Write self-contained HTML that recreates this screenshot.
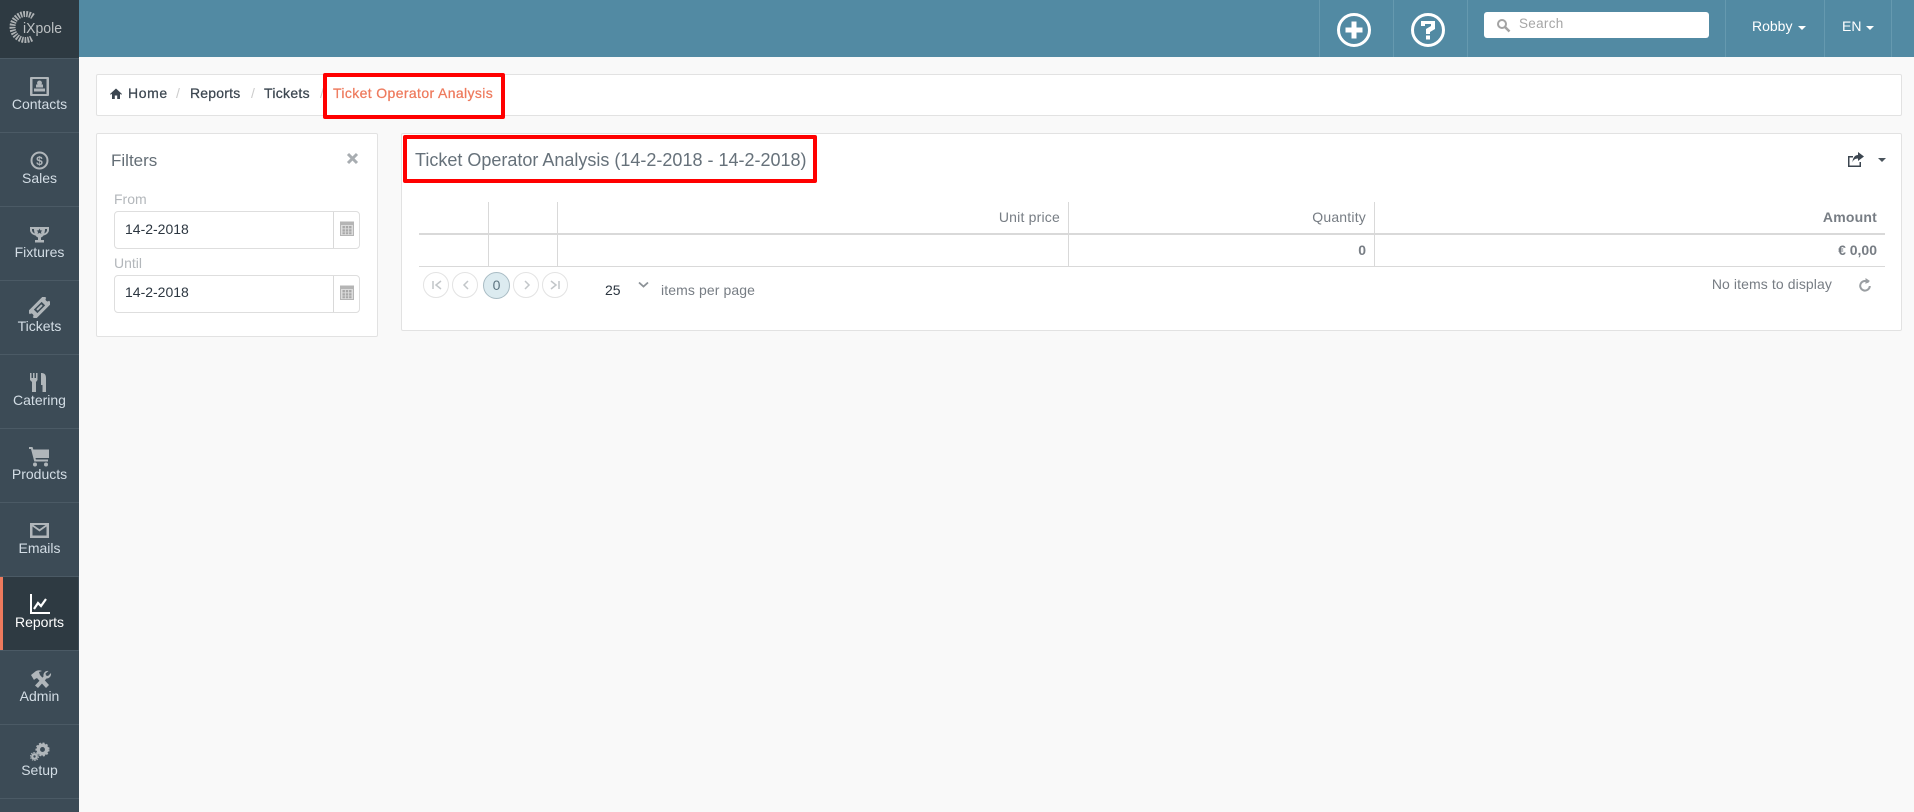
<!DOCTYPE html>
<html><head><meta charset="utf-8"><style>
html,body{margin:0;padding:0;width:1914px;height:812px;overflow:hidden;background:#f9f9f9;font-family:"Liberation Sans",sans-serif}
div,span,svg{position:absolute;white-space:nowrap}
.nl{left:0;width:79px;text-align:center;font-size:14px;line-height:20px;color:#d3dde5}
.nd{left:0;width:79px;height:1px;background:#4b5a65}
.ic{left:29px;width:21px;height:21px;fill:#b0b6ba}
.sep{top:0;width:1px;height:57px;background:#6599af}
.box{background:#fff;border:1px solid #e2e2e2;border-radius:2px;box-sizing:border-box}
.t{font-size:14px;line-height:18px;color:#3c4650}
.bc{-webkit-text-stroke:.25px currentColor}
.g{color:#777d84}
.vl{width:1px;background:#d9d9d9}
.pg{width:26px;height:26px;border:1px solid #e3e3e3;border-radius:50%;box-sizing:border-box;background:#fff;top:272px}
.red{border:4px solid #f00;box-sizing:border-box;border-radius:2px}
</style></head><body>

<div style="left:0;top:0;width:79px;height:812px;background:#3c4b56"></div>
<div style="left:0;top:0;width:79px;height:58px;background:#2e3a42"></div>
<svg style="left:0;top:0" width="79" height="58" viewBox="0 0 79 58">
<path d="M33 16.400A13 13 0 1 0 32 38.300" fill="none" stroke="#aeb2b4" stroke-width="6" stroke-dasharray="1.700 1.100"/>
<text x="23" y="33" font-family="Liberation Sans" font-size="15" fill="#bcc0c2" textLength="39" lengthAdjust="spacingAndGlyphs">iXpole</text>
</svg>

<div class="nd" style="top:58px"></div><div class="nd" style="top:132px"></div><div class="nd" style="top:206px"></div><div class="nd" style="top:280px"></div><div class="nd" style="top:354px"></div><div class="nd" style="top:428px"></div><div class="nd" style="top:502px"></div><div class="nd" style="top:576px"></div><div class="nd" style="top:650px"></div><div class="nd" style="top:724px"></div><div class="nd" style="top:798px"></div>

<div style="left:0;top:577px;width:78px;height:73px;background:#2e3a42"></div>
<div style="left:0;top:577px;width:3px;height:73px;background:#ee7a5d"></div>

<svg class="ic" style="top:76px" viewBox="0 0 21 21"><path fill-rule="evenodd" d="M2 1h17a1 1 0 0 1 1 1v17a1 1 0 0 1-1 1H2a1 1 0 0 1-1-1V2a1 1 0 0 1 1-1zm1.500 2v15h14V3zM10.500 4.500a2.500 2.500 0 0 1 2 4H14v3H7v-3h1.500a2.500 2.500 0 0 1 2-4zM5 12.500h11v3H5z"/></svg>
<div class="nl" style="top:94px">Contacts</div>

<svg class="ic" style="top:150px" viewBox="0 0 21 21"><path fill-rule="evenodd" d="M10.500 1.500a9 9 0 1 1 0 18 9 9 0 0 1 0-18zm0 2a7 7 0 1 0 0 14 7 7 0 0 0 0-14z"/><text x="10.500" y="15" text-anchor="middle" font-family="Liberation Sans" font-weight="bold" font-size="12">$</text></svg>
<div class="nl" style="top:168px">Sales</div>

<svg class="ic" style="top:224px" viewBox="0 0 21 21"><path fill-rule="evenodd" d="M1 3h19v3c0 3-3 5-5.500 5.500-.7 1-1.500 1.500-2.500 2V16h3v2.500H6V16h3v-2.500c-1-.5-1.800-1-2.500-2C4 11 1 9 1 6zm2 2v1c0 1.500 1.300 3 2.700 3.400-.4-1.300-.7-2.800-.7-4.400zm15 0h-2c0 1.600-.3 3.100-.7 4.400C16.700 9 18 7.500 18 6z"/><path d="M10.500 4.500l.9 1.900 2 .2-1.500 1.300.5 2-1.900-1-1.900 1 .5-2L7.600 6.600l2-.2z" fill="#3c4b56"/></svg>
<div class="nl" style="top:242px">Fixtures</div>

<svg class="ic" style="top:297px" viewBox="0 0 21 21"><g transform="rotate(-45 10.500 10.500)"><path fill-rule="evenodd" d="M-1 5h23v3.500a2 2 0 0 0 0 4V16H-1v-3.500a2 2 0 0 0 0-4zM5 8v5h11V8z"/><path d="M7 9.500h7v2H7z"/></g></svg>
<div class="nl" style="top:316px">Tickets</div>

<svg class="ic" style="top:372px" viewBox="0 0 21 21"><path d="M1 1h1.500v5H4V1h1.500v5H7V1h1.500v7l-1.500 2v10H3V10L1 8zM12 1c3 0 5 1 5 5v14h-3.500v-7H12z"/></svg>
<div class="nl" style="top:390px">Catering</div>

<svg class="ic" style="top:446px" viewBox="0 0 21 21"><path d="M0 1h3.500l.8 2.500H20v8.500H6.500l.4 1.500H19V15.500H5.300L2 3H0zM6 16.500a2 2 0 1 1 0 4 2 2 0 0 1 0-4zm11 0a2 2 0 1 1 0 4 2 2 0 0 1 0-4z"/></svg>
<div class="nl" style="top:464px">Products</div>

<svg class="ic" style="top:520px" viewBox="0 0 21 21"><path fill-rule="evenodd" d="M1 3h19v15H1zm2.500 3.500v9h14v-9l-7 5zM4.500 5l6 4.300L16.500 5z"/></svg>
<div class="nl" style="top:538px">Emails</div>

<svg class="ic" style="top:594px;fill:#fff" viewBox="0 0 21 21"><path d="M1 0h2v18h18v2H1z"/><path d="M5 15l4-6 3 3 5-7" fill="none" stroke="#fff" stroke-width="2.200"/></svg>
<div class="nl" style="top:612px;color:#fff">Reports</div>

<svg class="ic" style="top:669px;left:28px;width:24px;height:21px" viewBox="0 0 24 21"><path d="M3 6l5-4c2-1 4-1 6 0l-3 1 1 3 9 10-3 3-9-10-2 1-1 1z"/><path d="M23 4c.5 3-1.500 5.500-4.500 5.500L10 19l-3-2.500 8.500-9C15 4 17.500 1.500 20.500 2l-3 2.500 .5 2 2 .5z"/></svg>
<div class="nl" style="top:686px">Admin</div>

<svg class="ic" style="top:742px;left:29px;width:21px;height:21px" viewBox="0 0 21 21"><circle cx="13.500" cy="7.500" r="4.200" fill="none" stroke="#b0b6ba" stroke-width="3.500"/><circle cx="13.500" cy="7.500" r="6.300" fill="none" stroke="#b0b6ba" stroke-width="1.500" stroke-dasharray="2 1.700"/><circle cx="5.500" cy="14.500" r="2.300" fill="none" stroke="#b0b6ba" stroke-width="2.200"/><circle cx="5.500" cy="14.500" r="4" fill="none" stroke="#b0b6ba" stroke-width="1" stroke-dasharray="1.500 1"/></svg>
<div class="nl" style="top:760px">Setup</div>

<div style="left:79px;top:0;width:1835px;height:57px;background:#528aa3"></div>
<div class="sep" style="left:1319px"></div><div class="sep" style="left:1393px"></div><div class="sep" style="left:1467px"></div><div class="sep" style="left:1725px"></div><div class="sep" style="left:1824px"></div><div class="sep" style="left:1891px"></div>

<svg style="left:1336px;top:12px" width="36" height="36" viewBox="0 0 36 36"><circle cx="18" cy="18" r="15.500" fill="none" stroke="#fff" stroke-width="3"/><path d="M15.500 9.500h5v6h6v5h-6v6h-5v-6h-6v-5h6z" fill="#fff"/></svg>
<svg style="left:1410px;top:12px" width="36" height="36" viewBox="0 0 36 36"><circle cx="18" cy="18" r="15.500" fill="none" stroke="#fff" stroke-width="3"/><path d="M11 9h14v8l-5 3v2h-4v-5l5-3v-2h-6v2h-4zM16 23.500h4v4h-4z" fill="#fff"/></svg>

<div style="left:1484px;top:12px;width:225px;height:26px;background:#fff;border-radius:3px"></div>
<svg style="left:1496px;top:18px" width="15" height="15" viewBox="0 0 15 15"><circle cx="6" cy="6" r="4" fill="none" stroke="#a3a3a3" stroke-width="2"/><path d="M9 9l4.500 4.500" stroke="#a3a3a3" stroke-width="2.500"/></svg>
<div style="left:1519px;top:15px;font-size:13.500px;line-height:18px;color:#a6a6a6;letter-spacing:.3px">Search</div>
<div style="left:1752px;top:17px;font-size:14px;line-height:18px;color:#fff">Robby</div>
<div style="left:1798px;top:26px;width:0;height:0;border:4px solid transparent;border-top-color:#fff;border-bottom:0"></div>
<div style="left:1842px;top:17px;font-size:14px;line-height:18px;color:#fff">EN</div>
<div style="left:1866px;top:26px;width:0;height:0;border:4px solid transparent;border-top-color:#fff;border-bottom:0"></div>

<div class="box" style="left:96px;top:74px;width:1806px;height:42px"></div>
<svg style="left:110px;top:88px" width="12" height="11" viewBox="0 0 12 11"><path d="M6 .5L12 6l-.8.8L10 5.800V11H7.200V7.500H4.800V11H2V5.800L.8 6.800 0 6z" fill="#3c4650"/></svg>
<div class="t bc" style="left:128px;top:84px;letter-spacing:.6px">Home</div>
<div class="t" style="left:176px;top:84px;color:#ccc">/</div>
<div class="t bc" style="left:190px;top:84px;letter-spacing:.2px">Reports</div>
<div class="t" style="left:251px;top:84px;color:#ccc">/</div>
<div class="t bc" style="left:264px;top:84px;letter-spacing:.3px">Tickets</div>
<div class="t" style="left:320px;top:84px;color:#ccc">/</div>
<div class="t bc" style="left:333px;top:84px;color:#ee7a5d;letter-spacing:.37px">Ticket Operator Analysis</div>
<div class="red" style="left:323px;top:73px;width:182px;height:46px"></div>

<div class="box" style="left:96px;top:133px;width:282px;height:204px"></div>
<div style="left:111px;top:150px;font-size:17px;line-height:22px;color:#646e76">Filters</div>
<svg style="left:346px;top:152px" width="13" height="13" viewBox="0 0 13 13"><path d="M2 2l9 9M11 2l-9 9" stroke="#a8adb1" stroke-width="3"/></svg>
<div class="t" style="left:114px;top:190px;color:#b3b7bb">From</div>
<div style="left:114px;top:211px;width:246px;height:38px;border:1px solid #dedede;border-radius:4px;box-sizing:border-box"></div>
<div class="vl" style="left:333px;top:212px;height:36px"></div>
<div class="t" style="left:125px;top:220px;color:#2c3640">14-2-2018</div>
<div class="t" style="left:114px;top:254px;color:#b3b7bb">Until</div>
<div style="left:114px;top:275px;width:246px;height:38px;border:1px solid #dedede;border-radius:4px;box-sizing:border-box"></div>
<div class="vl" style="left:333px;top:276px;height:36px"></div>
<div class="t" style="left:125px;top:283px;color:#2c3640">14-2-2018</div>
<svg style="left:340px;top:220px" width="14" height="16" viewBox="0 0 14 16"><path d="M0 1.500h14V16H0z" fill="#b5b5b5"/><path d="M1 5h12v10H1z" fill="#dcdcdc"/><path d="M2.500 6h2.400v2.400H2.500zm3.300 0h2.400v2.400H5.800zm3.300 0h2.400v2.400H9.100zM2.500 9.200h2.400v2.400H2.500zm3.300 0h2.400v2.400H5.800zm3.300 0h2.400v2.400H9.100zM2.500 12.300h2.400v2H2.500zm3.300 0h2.400v2H5.800zm3.300 0h2.400v2H9.100z" fill="#a8a8a8"/></svg>
<svg style="left:340px;top:284px" width="14" height="16" viewBox="0 0 14 16"><path d="M0 1.500h14V16H0z" fill="#b5b5b5"/><path d="M1 5h12v10H1z" fill="#dcdcdc"/><path d="M2.500 6h2.400v2.400H2.500zm3.300 0h2.400v2.400H5.800zm3.300 0h2.400v2.400H9.100zM2.500 9.200h2.400v2.400H2.500zm3.300 0h2.400v2.400H5.800zm3.300 0h2.400v2.400H9.100zM2.500 12.300h2.400v2H2.500zm3.300 0h2.400v2H5.800zm3.300 0h2.400v2H9.100z" fill="#a8a8a8"/></svg>

<div class="box" style="left:401px;top:133px;width:1501px;height:198px"></div>
<div style="left:415px;top:149px;font-size:18px;line-height:22px;color:#66717a">Ticket Operator Analysis (14-2-2018 - 14-2-2018)</div>
<div class="red" style="left:403px;top:135px;width:414px;height:48px"></div>
<svg style="left:1847px;top:152px" width="18" height="15" viewBox="0 0 18 15"><path d="M1 4h5v1.500H2.500v8h10V10H14v5H1z" fill="#3c4650"/><path d="M11 0l6 4.500-6 4.500V6.500C8 6.500 6 8 5.500 10.500 5.500 6 8 3 11 3z" fill="#3c4650"/></svg>
<div style="left:1878px;top:158px;width:0;height:0;border:4px solid transparent;border-top-color:#4a545c;border-bottom:0"></div>

<div class="vl" style="left:488px;top:202px;height:64px"></div>
<div class="vl" style="left:557px;top:202px;height:64px"></div>
<div class="vl" style="left:1068px;top:202px;height:64px"></div>
<div class="vl" style="left:1374px;top:202px;height:64px"></div>
<div style="left:419px;top:233px;width:1466px;height:2px;background:#d9d9d9"></div>
<div style="left:419px;top:266px;width:1466px;height:1px;background:#d9d9d9"></div>
<div class="t g" style="right:854px;top:208px;letter-spacing:.2px">Unit price</div>
<div class="t g" style="right:548px;top:208px;letter-spacing:.2px">Quantity</div>
<div class="t g" style="right:37px;top:208px;font-weight:bold;letter-spacing:.2px">Amount</div>
<div class="t g" style="right:548px;top:241px;font-weight:bold">0</div>
<div class="t g" style="right:37px;top:241px;font-weight:bold">€ 0,00</div>

<div class="pg" style="left:423px"></div><div class="pg" style="left:452px"></div>
<div class="pg" style="left:483px;top:272px;width:27px;height:27px;background:#dcebf0;border-color:#a9bcc4"></div>
<div class="pg" style="left:513px"></div><div class="pg" style="left:542px"></div>
<svg style="left:423px;top:272px" width="146" height="26" viewBox="0 0 146 26" fill="none" stroke="#c2c6c9" stroke-width="1.500"><path d="M10 9v8M18 9l-5 4 5 4"/><path d="M45 9l-4 4 4 4"/><path d="M102 9l4 4-4 4"/><path d="M128 9l5 4-5 4M136 9v8"/></svg>
<div class="t" style="left:483px;top:276px;width:27px;text-align:center;color:#5d7480">0</div>
<div class="t" style="left:605px;top:281px;color:#2c3640">25</div>
<svg style="left:638px;top:281px" width="11" height="8" viewBox="0 0 11 8"><path d="M1 1.500l4.500 4 4.500-4" fill="none" stroke="#8c9297" stroke-width="1.800"/></svg>
<div class="t g" style="left:661px;top:281px;letter-spacing:.1px">items per page</div>
<div class="t g" style="right:82px;top:275px;letter-spacing:.1px">No items to display</div>
<svg style="left:1858px;top:278px" width="14" height="14" viewBox="0 0 14 14"><path d="M10.500 4.500A4.800 4.800 0 1 0 11.800 8" fill="none" stroke="#9a9ea2" stroke-width="2"/><path d="M7.500 0v6L12 3z" fill="#9a9ea2"/></svg>
</body></html>
